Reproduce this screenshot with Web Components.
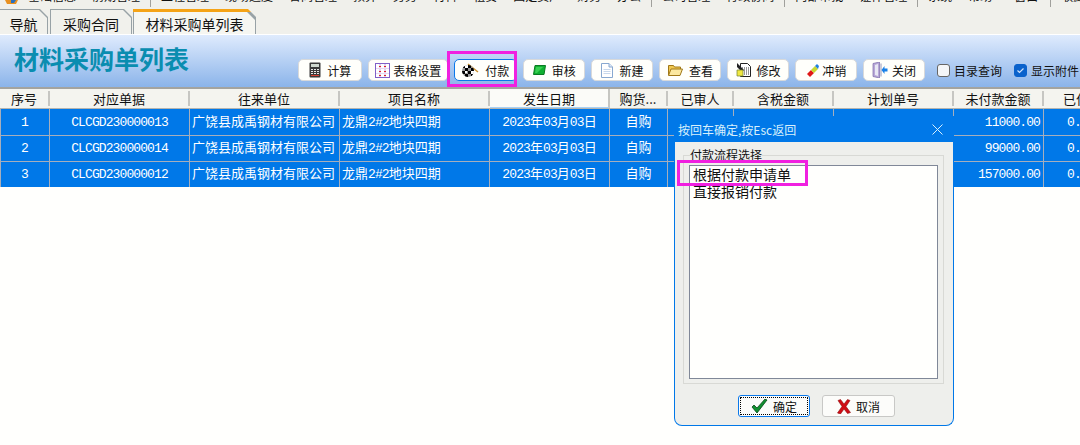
<!DOCTYPE html>
<html>
<head>
<meta charset="utf-8">
<style>
html, body { margin: 0; padding: 0; background: #fffffd; }
body {
  width: 1080px;
  height: 445px;
  overflow: hidden;
  position: relative;
  font-family: "Noto Sans CJK SC", "Liberation Sans", sans-serif;
  font-size: 12px;
  color: #000;
}
</style>
</head>
<body>
<app-menu></app-menu>
<tab-strip>
  <tab-item style="width:49px;margin-left:-1px">导航</tab-item>
  <tab-item style="width:82px;margin-left:1px">采购合同</tab-item>
  <tab-item style="width:123px" active>材料采购单列表</tab-item>
</tab-strip>
<page-header title-text="材料采购单列表">
  <tool-btn w="63.5" label="计算"><svg slot="icon" width="12" height="16" viewBox="0 0 12 16"><rect x=".5" y=".5" width="11" height="15" rx="1" fill="#3a3a3a"/><rect x="2" y="2" width="8" height="3" fill="#cfd8cf"/><path d="M2 7h2v1H2zM5 7h2v1H5zM8 7h2v1H8zM2 9h2v1H2zM5 9h2v1H5zM8 9h2v1H8zM2 11h2v1H2zM5 11h2v1H5zM8 11h2v1H8z" fill="#e8e8e8"/><path d="M2 13h8v1H2z" fill="#d84030"/></svg></tool-btn>
  <tool-btn w="80.5" label="表格设置" style="gap:3px"><svg slot="icon" width="15" height="15" viewBox="0 0 15 15"><rect x=".5" y=".5" width="14" height="14" fill="#fff" stroke="#8060c8"/><path d="M5 1v13M10 1v13" stroke="#c0a8e0"/><path d="M1 5.500h13M1 10.500h13" stroke="#e8d8f0"/><path d="M4 3h2v1H4zM9 3h2v1H9zM4 8h2v1H4zM9 8h2v1H9zM4 12h2v1H4zM9 12h2v1H9z" fill="#e02030"/></svg></tool-btn>
  <tool-btn w="62.5" label="付款" focus><svg slot="icon" width="17" height="15" viewBox="0 0 17 15"><defs><clipPath id="ball"><circle cx="6" cy="8" r="6"/></clipPath></defs><path d="M6 1l10 8" stroke="#c89030" stroke-width="1.500"/><g clip-path="url(#ball)"><rect width="12" height="15" y="1" fill="#999"/><path d="M0 2h3v3H0zM6 2h3v3H6zM3 5h3v3H3zM9 5h3v3H9zM0 8h3v3H0zM6 8h3v3H6zM3 11h3v3H3zM9 11h3v3H9z" fill="#000"/><path d="M3 2h3v3H3zM9 8h3v3H9zM3 8h2v2H3z" fill="#fff"/></g></svg></tool-btn>
  <tool-btn w="62.5" label="审核"><svg slot="icon" width="13" height="10" viewBox="0 0 13 10"><path d="M2 .5h10.500L11 9.500H.5z" fill="#10b030" stroke="#0a7a20"/><path d="M3 2h7L4 8H2z" fill="#38d050"/></svg></tool-btn>
  <tool-btn w="62" label="新建"><svg slot="icon" width="12" height="15" viewBox="0 0 12 15"><path d="M.5.500h7.500l3.500 3.500v10.500H.5z" fill="#fff" stroke="#88a8d0"/><path d="M8 .5V4h3.500" fill="#dce8f8" stroke="#88a8d0"/><path d="M2.500 6.500h7M2.500 8.500h7M2.500 10.500h7" stroke="#c8d8ec"/></svg></tool-btn>
  <tool-btn w="62" label="查看"><svg slot="icon" width="15" height="12" viewBox="0 0 15 12"><path d="M.5 11V1.500h5l1 1.500h6v2" fill="#f0c850" stroke="#a07818"/><path d="M.5 11.500l2.500-6.500h11.500l-2.500 6.500z" fill="#fbe8a0" stroke="#a07818"/></svg></tool-btn>
  <tool-btn w="62" label="修改" style="gap:4px"><svg slot="icon" width="16" height="16" viewBox="0 0 16 16"><path d="M4.500 1.500h7l3 3v10h-10z" fill="#fff" stroke="#222"/><path d="M6 6h7M6 8h7M6 10h7M6 12h7" stroke="#333" stroke-dasharray="1 1"/><path d="M1 1l7 7-2 2-5-5z" fill="#222"/><path d="M1 8h6v6H1z" fill="#f0e840" stroke="#708030" stroke-width=".7"/></svg></tool-btn>
  <tool-btn w="61.500" label="冲销" style="gap:1px"><svg slot="icon" width="15" height="15" viewBox="0 0 15 15"><path d="M1 11L5 7l3 3-4 4z" fill="#e01818"/><path d="M5 7l4-4 3 3-4 4z" fill="#c8d830"/><path d="M9 3l2-2 2 2-1 3z" fill="#2080e0"/></svg></tool-btn>
  <tool-btn w="62" label="关闭" style="gap:4px"><svg slot="icon" width="16" height="16" viewBox="0 0 16 16"><path d="M1 1.500L7.500 0v16L1 14.500z" fill="#b8a8d8" stroke="#7868a8" stroke-width=".7"/><path d="M3 3l3-1v12l-3-1z" fill="#e8e8f4"/><path d="M8.500 1.500h1v13h-1z" fill="#9898b8"/><path d="M15.500 6.500h-3V4l-3 4 3 4V9.500h3z" fill="#1880e8"/></svg></tool-btn>
  <tool-check label="目录查询" style="margin-left:6px"></tool-check>
  <tool-check label="显示附件" checked style="margin-left:6px"></tool-check>
</page-header>
<data-grid></data-grid>
<pay-dialog></pay-dialog>
<mark-box style="left:447px;top:51px;width:70px;height:36px"></mark-box>
<mark-box style="left:677px;top:160px;width:131px;height:26px"></mark-box>

<script>
const menuStyle = `<style>
:host { display: flex; height: 9px; overflow: hidden; background: #f0f0eb; padding-left: 20px; position: relative; }
span { flex: none; padding: 0 8px; margin-top: -13px; height: 17px; line-height: 17px; font-size: 12px; color: #111; white-space: nowrap; }
i { flex: none; width: 1px; height: 7px; background: #a0a09c; margin: 0 2px; }
svg { position: absolute; left: 5px; top: 0; }
</style>`;

class AppMenu extends HTMLElement {
  constructor() {
    super();
    this.shadowDOM = this.attachShadow({mode: "open"});
  }

  connectedCallback() {
    const groups = [
      ["基础信息", "前期管理"],
      ["工程管理", "现场进度", "合同管理", "预算", "劳务", "材料", "租赁", "固定资产", "财务", "办公"],
      ["公司管理", "行政协同"],
      ["内部审批", "证件管理"],
      ["系统", "帮助", "窗口"],
      ["收藏"]
    ];
    const html = groups
      .map(g => g.map(t => `<span${t === "窗口" ? ' style="padding-left:14px;padding-right:10px"' : ""}>${t}</span>`).join(""))
      .join("<i></i>");
    this.shadowDOM.innerHTML = menuStyle + `<svg width="13" height="4" viewBox="0 0 13 4"><path d="M0 0h13l-2 4H2z" fill="#e89020"/><path d="M6 0h5L9 3H6z" fill="#2870c0"/></svg>` + html;
  }
}

class TabStrip extends HTMLElement {
  constructor() {
    super();
    this.attachShadow({mode: "open"}).innerHTML = `<style>
    :host { display: flex; align-items: flex-end; gap: 1px; height: 26px; background: #f0f0eb; padding-top: 1px; box-sizing: border-box; border-bottom: 1px solid #fff; overflow: hidden; }
    </style><slot></slot>`;
  }
}

class TabItem extends HTMLElement {
  constructor() {
    super();
    this.attachShadow({mode: "open"}).innerHTML = `<style>
    :host { display: block; flex: none; height: 25px; background: #98a2a6; clip-path: polygon(0 0, calc(100% - 8px) 0, 100% 8px, 100% 100%, 0 100%); padding: 0 1px; box-sizing: border-box; }
    :host([active]) { background: linear-gradient(#f5a316 3px, #98a2a6 3px); }
    div { height: 24px; margin-top: 1px; background: #f1f1ec; clip-path: polygon(0 0, calc(100% - 8px) 0, 100% 8px, 100% 100%, 0 100%); text-align: center; font-size: 14px; line-height: 29px; color: #111; white-space: nowrap; }
    :host([active]) div { margin-top: 3px; height: 22px; line-height: 25px; background: #f6f6f1; }
    </style><div><slot></slot></div>`;
  }
}

class PageHeader extends HTMLElement {
  constructor() {
    super();
    this.attachShadow({mode: "open"}).innerHTML = `<style>
    :host { display: flex; height: 52px; padding: 0 1px 0 14px; box-sizing: border-box; background: linear-gradient(#dfebfd, #8bb4ea); }
    h1 { margin: 9px 0 0; font-size: 25px; line-height: 28px; font-weight: 700; color: #0a8db0; white-space: nowrap; letter-spacing: 0; }
    .tools { margin-left: auto; align-self: flex-end; margin-bottom: 6px; display: flex; align-items: center; gap: 6px; }
    </style><h1></h1><div class="tools"><slot></slot></div>`;
  }

  connectedCallback() {
    this.shadowRoot.querySelector("h1").textContent = this.getAttribute("title-text");
  }
}

class ToolBtn extends HTMLElement {
  constructor() {
    super();
    this.attachShadow({mode: "open"}).innerHTML = `<style>
    :host { display: flex; align-items: center; justify-content: center; gap: 6px; flex: none; height: 22px; box-sizing: border-box; border: 1px solid #d8d9da; border-radius: 5px; background: #fffffb; font-size: 12px; color: #111; }
    :host([focus]) { border: 1px solid #0a78ea; }
    slot[name=icon] { display: flex; }
    </style><slot name="icon"></slot><span></span>`;
  }

  connectedCallback() {
    this.style.width = this.getAttribute("w") + "px";
    this.shadowRoot.querySelector("span").textContent = this.getAttribute("label");
  }
}

class ToolCheck extends HTMLElement {
  constructor() {
    super();
    this.attachShadow({mode: "open"}).innerHTML = `<style>
    :host { display: flex; align-items: center; gap: 4px; flex: none; font-size: 12px; color: #111; white-space: nowrap; }
    b { width: 13px; height: 13px; box-sizing: border-box; border: 1px solid #666; border-radius: 3px; background: #f4f6f8; display: flex; }
    :host([checked]) b { background: #0a62cc; border-color: #0a62cc; }
    svg { display: none; }
    :host([checked]) svg { display: block; }
    </style><b><svg width="11" height="11" viewBox="0 0 11 11"><path d="M2.500 5.500l2 2 4-4" fill="none" stroke="#cfe2fa" stroke-width="1.200"/></svg></b><span></span>`;
  }

  connectedCallback() {
    this.shadowRoot.querySelector("span").textContent = this.getAttribute("label");
  }
}

const gridCols = "50px 140px 150px 150px 120px 58px 66px 100px 120px 90px 90px";
const gridHead = ["序号", "对应单据", "往来单位", "项目名称", "发生日期", "购货...", "已审人", "含税金额", "计划单号", "未付款金额", "已付款金额"];
const gridRows = [
  ["1", "CLCGD230000013", "广饶县成禹钢材有限公司", "龙鼎2#2地块四期", "2023年03月03日", "自购", "", "", "", "11000.00", "0.00"],
  ["2", "CLCGD230000014", "广饶县成禹钢材有限公司", "龙鼎2#2地块四期", "2023年03月03日", "自购", "", "", "", "99000.00", "0.00"],
  ["3", "CLCGD230000012", "广饶县成禹钢材有限公司", "龙鼎2#2地块四期", "2023年03月03日", "自购", "", "", "", "157000.00", "0.00"]
];

const gridStyle = `<style>
:host { display: block; width: 1080px; overflow: hidden; border-top: 2px solid #a4a4a0; font-size: 13px; }
.row { display: grid; grid-template-columns: ${gridCols}; width: 1134px; }
.head { background: #f4f4ef; height: 19px; border-bottom: 1px solid #b4b4b0; box-sizing: content-box; }
.head div { margin: 2px 0; height: 15px; line-height: 15px; text-align: center; border-right: 2px solid #c6c6c2; color: #111; white-space: nowrap; box-sizing: border-box; }
.head div.hot { margin: 0; height: 19px; line-height: 19px; background: #fbfbf8; border-bottom: 1px solid #a8d0f4; }
.head div:last-child { text-align: left; padding-left: 19px; border: 0; }
.data { background: #0078e8; color: #fff; height: 26px; box-shadow: inset 1px 0 #a6aebc; }
.data div { line-height: 24px; text-align: center; border-right: 1px solid #a6aebc; border-bottom: 1px solid #a6aebc; white-space: nowrap; box-sizing: border-box; }
.data div.left { text-align: left; padding-left: 2px; }
.data div.right { text-align: right; padding-right: 3px; }
.data div:last-child { text-align: left; padding-left: 23px; border-right: 0; }
.l { font-family: "Liberation Mono", monospace; font-size: 13px; letter-spacing: -0.900px; }
</style>`;

class DataGrid extends HTMLElement {
  constructor() {
    super();
    this.shadowDOM = this.attachShadow({mode: "open"});
  }

  connectedCallback() {
    this.render();
  }

  cell(text) {
    return text.replace(/[\x20-\x7e]+/g, m => `<span class="l">${m}</span>`);
  }

  render() {
    const head = gridHead.map((t, i) => `<div${i === 4 ? ' class="hot"' : ""}>${t}</div>`).join("");
    const rows = gridRows.map(r => {
      const cells = r.map((t, i) => {
        const cls = i === 2 || i === 3 ? "left" : i === 9 ? "right" : "";
        return `<div class="${cls}">${this.cell(t)}</div>`;
      });
      return `<div class="row data">${cells.join("")}</div>`;
    });
    this.shadowDOM.innerHTML = gridStyle + `<div class="row head">${head}</div>` + rows.join("");
  }
}

class PayDialog extends HTMLElement {
  constructor() {
    super();
    this.attachShadow({mode: "open"}).innerHTML = `<style>
    :host { display: block; position: absolute; left: 674px; top: 116px; width: 280px; height: 310px; box-sizing: border-box; border: 1px solid #0078e8; border-top: 0; border-radius: 0 0 8px 8px; background: #eeefec; overflow: hidden; }
    .title { display: flex; align-items: center; justify-content: space-between; height: 26px; padding: 0 10px 0 3px; background: #0078e8; color: #d8f0fc; font-size: 12px; }
    .body { padding: 7px 9px 0 8px; }
    fieldset { margin: 0; padding: 4px 5px 4px 5px; height: 235px; box-sizing: border-box; border: 1px solid #d8d9d5; min-width: 0; }
    legend { padding: 0; margin-left: 1px; height: 12px; line-height: 12px; font-size: 12px; color: #111; }
    .list { height: 214px; box-sizing: border-box; background: #fffffd; border: 1px solid #808898; padding: 0 3px; font-size: 14px; line-height: 17px; color: #111; }
    .foot { display: flex; gap: 12px; margin-top: 11px; padding-left: 55px; }
    .btn { display: flex; align-items: center; justify-content: center; gap: 5px; height: 22px; box-sizing: border-box; border: 1px solid #c8c8c6; border-radius: 3px; background: #fcfcfa; font-size: 12px; color: #111; }
    .ok { width: 72px; border-color: #0a78ea; outline: 1px dotted #000; outline-offset: -3px; }
    .no { width: 73px; }
    </style>
    <div class="title"><span>按回车确定,按Esc返回</span>
      <svg width="11" height="11" viewBox="0 0 11 11"><path d="M.5.500l10 10M10.500.500l-10 10" stroke="#d8f0fc" fill="none"/></svg></div>
    <div class="body">
      <fieldset><legend>付款流程选择</legend>
        <div class="list"><div>根据付款申请单</div><div>直接报销付款</div></div>
      </fieldset>
      <div class="foot">
        <div class="btn ok"><svg width="17" height="15" viewBox="0 0 17 15"><path d="M1 8l2-2 3 3 8-9 2 1-10 13z" fill="#109030" stroke="#084818" stroke-width=".8"/></svg><span>确定</span></div>
        <div class="btn no"><svg width="14" height="15" viewBox="0 0 14 15"><path d="M1 1.500l2.500-1L7 5l3.500-4.500 2.500 1L9 7.500l4.500 6-3 1L7 10l-3.500 5-3-1L5 7.500z" fill="#d00c14" stroke="#901010" stroke-width=".6"/></svg><span>取消</span></div>
      </div>
    </div>`;
  }
}

class MarkBox extends HTMLElement {
  constructor() {
    super();
    this.attachShadow({mode: "open"}).innerHTML = `<style>
    :host { display: block; position: absolute; box-sizing: border-box; border: 3px solid #f020e0; pointer-events: none; }
    </style>`;
  }
}

customElements.define("app-menu", AppMenu);
customElements.define("tab-strip", TabStrip);
customElements.define("tab-item", TabItem);
customElements.define("page-header", PageHeader);
customElements.define("tool-btn", ToolBtn);
customElements.define("tool-check", ToolCheck);
customElements.define("data-grid", DataGrid);
customElements.define("pay-dialog", PayDialog);
customElements.define("mark-box", MarkBox);
</script>
</body>
</html>
